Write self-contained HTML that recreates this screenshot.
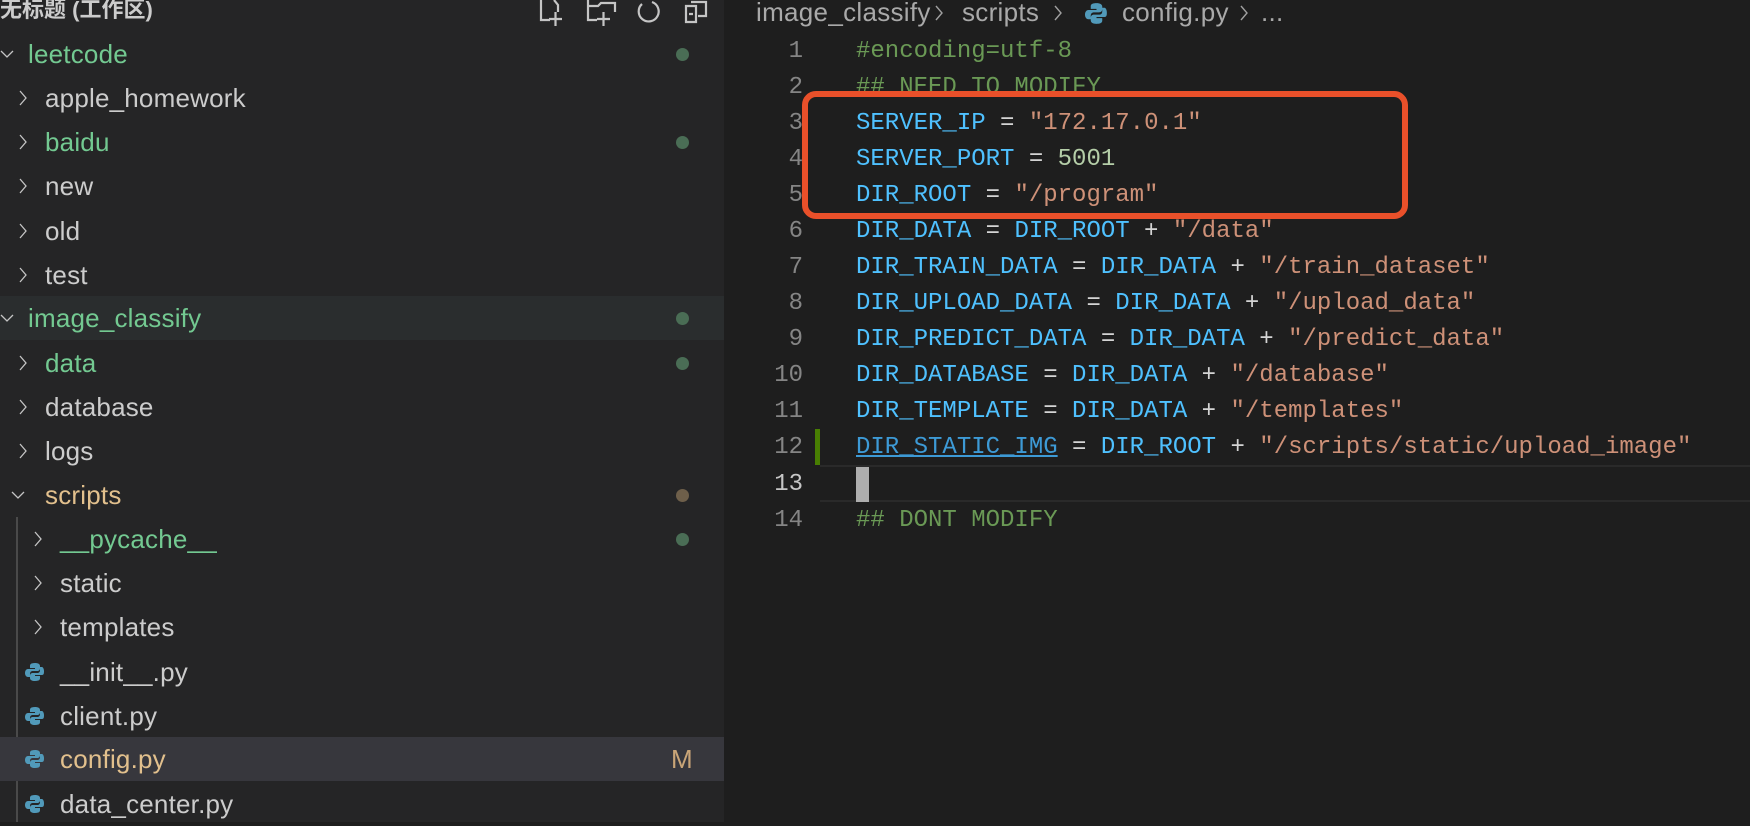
<!DOCTYPE html>
<html><head><meta charset="utf-8"><style>
*{margin:0;padding:0;box-sizing:border-box}
body{width:1750px;height:822px;overflow:hidden;background:#1e1e1e;position:relative;font-family:"Liberation Sans","Noto Sans CJK SC",sans-serif}
#side{position:absolute;left:0;top:0;width:724px;height:822px;background:#252526}
.row{position:absolute;left:0;width:724px;height:44px;line-height:44px;font-size:26px;color:#cccccc;white-space:nowrap;letter-spacing:0.2px}
.row .t{position:absolute;top:0}
.g{color:#73c991}.y{color:#e2c08d}
.chev{position:absolute;top:11px;width:14px;height:22px}
.dot{position:absolute;left:676px;top:16px;width:13px;height:13px;border-radius:50%;background:#4a6d55}
.py{position:absolute;left:25px;top:12px;width:20px;height:20px}
.code{position:absolute;left:0;width:1750px;height:36px;line-height:36px;font-family:"Liberation Mono",monospace;font-size:24px;white-space:pre}
.ln{position:absolute;width:803px;text-align:right;color:#858585;left:0;top:0}
.tx{position:absolute;left:856px;top:0;color:#d4d4d4}
.v{color:#4fc1ff}.s{color:#ce9178}.n{color:#b5cea8}.c{color:#6a9955}
.bc{position:absolute;top:-4px;height:32px;line-height:32px;font-size:26px;color:#a9a9a9;white-space:nowrap;letter-spacing:0.3px}
</style></head><body>
<div id="side">
 <div style="position:absolute;left:0;top:-6px;font-size:22px;font-weight:bold;color:#cccccc;line-height:32px">无标题 (工作区)</div>
 <svg style="position:absolute;left:536px;top:0" width="180" height="28" fill="none" stroke="#c5c5c5" stroke-width="2.2">
  <path d="M5 0 V20 H14 M18 0 L22 5 V12 M13 19 H26 M19.5 12 V26"/>
  <path d="M52 0 V20 H61 M52 6 H62 L65 3 H79 V12 M61 19 H74 M67.5 12 V26"/>
  <path d="M106 4 A10 10 0 1 0 116 2"/>
  <path d="M150 6 H160 V22 H150 Z M153 14 H157 M155 2 H170 V16 H162"/>
 </svg>
</div>
<div class="row" style="top:32px"><svg class="chev" style="left:0" viewBox="0 0 14 22"><path d="M1 8 L7 14 L13 8" stroke="#c5c5c5" stroke-width="1.3" fill="none"/></svg><span class="t g" style="left:28px">leetcode</span><div class="dot"></div></div>
<div class="row" style="top:76px"><svg class="chev" style="left:16px" viewBox="0 0 14 22"><path d="M4 4 L10 11 L4 18" stroke="#c5c5c5" stroke-width="1.3" fill="none"/></svg><span class="t" style="left:45px">apple_homework</span></div>
<div class="row" style="top:120px"><svg class="chev" style="left:16px" viewBox="0 0 14 22"><path d="M4 4 L10 11 L4 18" stroke="#c5c5c5" stroke-width="1.3" fill="none"/></svg><span class="t g" style="left:45px">baidu</span><div class="dot"></div></div>
<div class="row" style="top:164px"><svg class="chev" style="left:16px" viewBox="0 0 14 22"><path d="M4 4 L10 11 L4 18" stroke="#c5c5c5" stroke-width="1.3" fill="none"/></svg><span class="t" style="left:45px">new</span></div>
<div class="row" style="top:209px"><svg class="chev" style="left:16px" viewBox="0 0 14 22"><path d="M4 4 L10 11 L4 18" stroke="#c5c5c5" stroke-width="1.3" fill="none"/></svg><span class="t" style="left:45px">old</span></div>
<div class="row" style="top:253px"><svg class="chev" style="left:16px" viewBox="0 0 14 22"><path d="M4 4 L10 11 L4 18" stroke="#c5c5c5" stroke-width="1.3" fill="none"/></svg><span class="t" style="left:45px">test</span></div>
<div class="row" style="top:296px;background:#2a2d2e"><svg class="chev" style="left:0" viewBox="0 0 14 22"><path d="M1 8 L7 14 L13 8" stroke="#c5c5c5" stroke-width="1.3" fill="none"/></svg><span class="t g" style="left:28px">image_classify</span><div class="dot"></div></div>
<div class="row" style="top:341px"><svg class="chev" style="left:16px" viewBox="0 0 14 22"><path d="M4 4 L10 11 L4 18" stroke="#c5c5c5" stroke-width="1.3" fill="none"/></svg><span class="t g" style="left:45px">data</span><div class="dot"></div></div>
<div class="row" style="top:385px"><svg class="chev" style="left:16px" viewBox="0 0 14 22"><path d="M4 4 L10 11 L4 18" stroke="#c5c5c5" stroke-width="1.3" fill="none"/></svg><span class="t" style="left:45px">database</span></div>
<div class="row" style="top:429px"><svg class="chev" style="left:16px" viewBox="0 0 14 22"><path d="M4 4 L10 11 L4 18" stroke="#c5c5c5" stroke-width="1.3" fill="none"/></svg><span class="t" style="left:45px">logs</span></div>
<div class="row" style="top:473px"><svg class="chev" style="left:11px" viewBox="0 0 14 22"><path d="M1 8 L7 14 L13 8" stroke="#c5c5c5" stroke-width="1.3" fill="none"/></svg><span class="t y" style="left:45px">scripts</span><div class="dot" style="background:#6e5f4a"></div></div>
<div style="position:absolute;left:16px;top:517px;width:2px;height:305px;background:#4a4a4a"></div>
<div class="row" style="top:517px"><svg class="chev" style="left:31px" viewBox="0 0 14 22"><path d="M4 4 L10 11 L4 18" stroke="#c5c5c5" stroke-width="1.3" fill="none"/></svg><span class="t g" style="left:60px">__pycache__</span><div class="dot"></div></div>
<div class="row" style="top:561px"><svg class="chev" style="left:31px" viewBox="0 0 14 22"><path d="M4 4 L10 11 L4 18" stroke="#c5c5c5" stroke-width="1.3" fill="none"/></svg><span class="t" style="left:60px">static</span></div>
<div class="row" style="top:605px"><svg class="chev" style="left:31px" viewBox="0 0 14 22"><path d="M4 4 L10 11 L4 18" stroke="#c5c5c5" stroke-width="1.3" fill="none"/></svg><span class="t" style="left:60px">templates</span></div>
<div class="row" style="top:650px"><svg class="py" viewBox="0 0 20 20"><path d="M10 1 C5 1 5 3 5 4 V6 H10 V7 H3 C1 7 0 9 0 11 C0 13 1 15 3 15 H5 V12 C5 10 6 9 8 9 H12 C14 9 15 8 15 6 V4 C15 2 13 1 10 1Z M19 9 C19 7 18 5 17 5 H15 V8 C15 10 14 11 12 11 H8 C6 11 5 12 5 14 V16 C5 18 7 19 10 19 C15 19 15 17 15 16 V14 H10 V13 H17 C19 13 19 11 19 9Z" fill="#519aba"/></svg><span class="t" style="left:60px">__init__.py</span></div>
<div class="row" style="top:694px"><svg class="py" viewBox="0 0 20 20"><path d="M10 1 C5 1 5 3 5 4 V6 H10 V7 H3 C1 7 0 9 0 11 C0 13 1 15 3 15 H5 V12 C5 10 6 9 8 9 H12 C14 9 15 8 15 6 V4 C15 2 13 1 10 1Z M19 9 C19 7 18 5 17 5 H15 V8 C15 10 14 11 12 11 H8 C6 11 5 12 5 14 V16 C5 18 7 19 10 19 C15 19 15 17 15 16 V14 H10 V13 H17 C19 13 19 11 19 9Z" fill="#519aba"/></svg><span class="t" style="left:60px">client.py</span></div>
<div class="row" style="top:737px;background:#37373d"><svg class="py" viewBox="0 0 20 20"><path d="M10 1 C5 1 5 3 5 4 V6 H10 V7 H3 C1 7 0 9 0 11 C0 13 1 15 3 15 H5 V12 C5 10 6 9 8 9 H12 C14 9 15 8 15 6 V4 C15 2 13 1 10 1Z M19 9 C19 7 18 5 17 5 H15 V8 C15 10 14 11 12 11 H8 C6 11 5 12 5 14 V16 C5 18 7 19 10 19 C15 19 15 17 15 16 V14 H10 V13 H17 C19 13 19 11 19 9Z" fill="#519aba"/></svg><span class="t y" style="left:60px">config.py</span><span class="t" style="left:671px;color:#c9a578">M</span></div>
<div class="row" style="top:782px"><svg class="py" viewBox="0 0 20 20"><path d="M10 1 C5 1 5 3 5 4 V6 H10 V7 H3 C1 7 0 9 0 11 C0 13 1 15 3 15 H5 V12 C5 10 6 9 8 9 H12 C14 9 15 8 15 6 V4 C15 2 13 1 10 1Z M19 9 C19 7 18 5 17 5 H15 V8 C15 10 14 11 12 11 H8 C6 11 5 12 5 14 V16 C5 18 7 19 10 19 C15 19 15 17 15 16 V14 H10 V13 H17 C19 13 19 11 19 9Z" fill="#519aba"/></svg><span class="t" style="left:60px">data_center.py</span></div>

<!-- breadcrumb, absolute pieces -->
<div class="bc" style="left:756px">image_classify</div>
<svg style="position:absolute;left:932px;top:2px" width="14" height="22"><path d="M4 4 L10 11 L4 18" stroke="#a0a0a0" stroke-width="1.4" fill="none"/></svg>
<div class="bc" style="left:962px">scripts</div>
<svg style="position:absolute;left:1051px;top:2px" width="14" height="22"><path d="M4 4 L10 11 L4 18" stroke="#a0a0a0" stroke-width="1.4" fill="none"/></svg>
<svg style="position:absolute;left:1085px;top:2px" width="23" height="23" viewBox="0 0 20 20"><path d="M10 1 C5 1 5 3 5 4 V6 H10 V7 H3 C1 7 0 9 0 11 C0 13 1 15 3 15 H5 V12 C5 10 6 9 8 9 H12 C14 9 15 8 15 6 V4 C15 2 13 1 10 1Z M19 9 C19 7 18 5 17 5 H15 V8 C15 10 14 11 12 11 H8 C6 11 5 12 5 14 V16 C5 18 7 19 10 19 C15 19 15 17 15 16 V14 H10 V13 H17 C19 13 19 11 19 9Z" fill="#519aba"/></svg>
<div class="bc" style="left:1122px">config.py</div>
<svg style="position:absolute;left:1237px;top:2px" width="14" height="22"><path d="M4 4 L10 11 L4 18" stroke="#a0a0a0" stroke-width="1.4" fill="none"/></svg>
<div class="bc" style="left:1261px">...</div>

<div style="position:absolute;left:820px;top:465px;width:930px;height:37px;border-top:2px solid #2a2a2a;border-bottom:2px solid #2a2a2a"></div>
<div style="position:absolute;left:856px;top:467px;width:13px;height:35px;background:#aeaeae"></div>
<div style="position:absolute;left:815px;top:429px;width:5px;height:36px;background:#487e02"></div>

<div class="code" style="top:34px"><span class="ln">1</span><span class="tx c">#encoding=utf-8</span></div>
<div class="code" style="top:70px"><span class="ln">2</span><span class="tx c">## NEED TO MODIFY</span></div>
<div class="code" style="top:106px"><span class="ln">3</span><span class="tx"><span class="v">SERVER_IP</span> = <span class="s">"172.17.0.1"</span></span></div>
<div class="code" style="top:142px"><span class="ln">4</span><span class="tx"><span class="v">SERVER_PORT</span> = <span class="n">5001</span></span></div>
<div class="code" style="top:178px"><span class="ln">5</span><span class="tx"><span class="v">DIR_ROOT</span> = <span class="s">"/program"</span></span></div>
<div class="code" style="top:214px"><span class="ln">6</span><span class="tx"><span class="v">DIR_DATA</span> = <span class="v">DIR_ROOT</span> + <span class="s">"/data"</span></span></div>
<div class="code" style="top:250px"><span class="ln">7</span><span class="tx"><span class="v">DIR_TRAIN_DATA</span> = <span class="v">DIR_DATA</span> + <span class="s">"/train_dataset"</span></span></div>
<div class="code" style="top:286px"><span class="ln">8</span><span class="tx"><span class="v">DIR_UPLOAD_DATA</span> = <span class="v">DIR_DATA</span> + <span class="s">"/upload_data"</span></span></div>
<div class="code" style="top:322px"><span class="ln">9</span><span class="tx"><span class="v">DIR_PREDICT_DATA</span> = <span class="v">DIR_DATA</span> + <span class="s">"/predict_data"</span></span></div>
<div class="code" style="top:358px"><span class="ln">10</span><span class="tx"><span class="v">DIR_DATABASE</span> = <span class="v">DIR_DATA</span> + <span class="s">"/database"</span></span></div>
<div class="code" style="top:394px"><span class="ln">11</span><span class="tx"><span class="v">DIR_TEMPLATE</span> = <span class="v">DIR_DATA</span> + <span class="s">"/templates"</span></span></div>
<div class="code" style="top:430px"><span class="ln">12</span><span class="tx"><span style="color:#3d9ad6;text-decoration:underline">DIR_STATIC_IMG</span> = <span class="v">DIR_ROOT</span> + <span class="s">"/scripts/static/upload_image"</span></span></div>
<div class="code" style="top:467px"><span class="ln" style="color:#c6c6c6">13</span></div>
<div class="code" style="top:503px"><span class="ln">14</span><span class="tx c">## DONT MODIFY</span></div>

<div style="position:absolute;left:802px;top:91px;width:606px;height:128px;border:6px solid #e9502a;border-radius:14px"></div>
</body></html>
